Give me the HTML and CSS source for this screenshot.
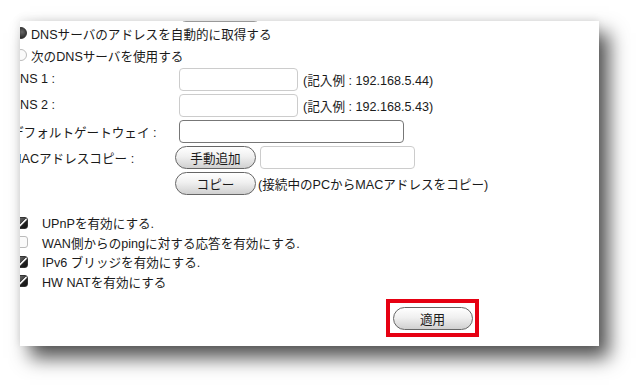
FILE: index.html
```html
<!DOCTYPE html>
<html lang="ja">
<head>
    <meta charset="UTF-8">
    <meta name="viewport" content="width=device-width, initial-scale=1.0">
    <title>WAN設定</title>
    <link rel="stylesheet" href="styles.css">
</head>
<body>
    <div class="panel">
        <div class="inner">
            <div class="top-btn"></div>

            <div class="radio-row">
                <span class="radio on"></span>
                <span>DNSサーバのアドレスを自動的に取得する</span>
            </div>
            <div class="radio-row">
                <span class="radio"></span>
                <span>次のDNSサーバを使用する</span>
            </div>

            <div class="row">
                <label class="lbl">DNS 1 :</label>
                <input type="text" class="field short">
                <span class="hint">(記入例 : 192.168.5.44)</span>
            </div>
            <div class="row">
                <label class="lbl">DNS 2 :</label>
                <input type="text" class="field short">
                <span class="hint">(記入例 : 192.168.5.43)</span>
            </div>
            <div class="row">
                <label class="lbl">デフォルトゲートウェイ :</label>
                <input type="text" class="field long">
            </div>
            <div class="row">
                <label class="lbl">MACアドレスコピー :</label>
                <button class="pill">手動追加</button>
                <input type="text" class="field mac">
            </div>
            <div class="row">
                <span class="lbl"></span>
                <button class="pill">コピー</button>
                <span class="hint tight">(接続中のPCからMACアドレスをコピー)</span>
            </div>

            <div class="checks">
                <div class="check-row"><span class="box on"></span>UPnPを有効にする.</div>
                <div class="check-row"><span class="box"></span>WAN側からのpingに対する応答を有効にする.</div>
                <div class="check-row"><span class="box on"></span>IPv6 ブリッジを有効にする.</div>
                <div class="check-row"><span class="box on"></span>HW NATを有効にする</div>
            </div>

            <div class="apply-area">
                <div class="mark">
                    <button class="pill apply">適用</button>
                </div>
            </div>
        </div>
    </div>
</body>
</html>
```

FILE: styles.css
```css
html, body {
    margin: 0;
    background: #fff;
}

body {
    padding: 21px 0 42px 20px;
    min-height: 388px;
    box-sizing: border-box;
    font-family: "Liberation Sans", "Noto Sans CJK JP", sans-serif;
    font-size: 12.6px;
    color: #1a1a1a;
}

.panel {
    width: 579px;
    height: 325px;
    background: #fff;
    overflow: hidden;
    box-shadow: 10px 12px 18px rgba(0, 0, 0, 0.68), -1px -2px 8px rgba(0, 0, 0, 0.08);
}

.inner {
    margin-left: -9px;
}

.top-btn {
    margin: -21px 0 0 167px;
    width: 82px;
    height: 20px;
    border: 1px solid #999;
    border-radius: 8px;
    background: linear-gradient(#fff, #e6e6e6);
}

.radio-row {
    height: 22px;
    display: flex;
    align-items: center;
}

.radio {
    width: 12px;
    height: 12px;
    border-radius: 50%;
    margin: 0 4px 0 4px;
    border: 1px solid #bbb;
    background: #fafafa;
    box-sizing: border-box;
}
.radio.on {
    border-color: #333;
    background: radial-gradient(circle at 60% 40%, #666, #111);
}

.row {
    height: 26px;
    display: flex;
    align-items: center;
}

.lbl {
    width: 168px;
    flex: none;
    white-space: nowrap;
}

.field {
    height: 23px;
    box-sizing: border-box;
    border: 1px solid #ccc;
    border-radius: 4px;
    background: #fff;
    font: inherit;
}
.field.short { width: 119px; }
.field.long { width: 225px; border-color: #777; }
.field.mac { width: 155px; margin-left: 4px; }

.hint {
    margin-left: 5px;
    white-space: nowrap;
}
.hint.tight { margin-left: 2px; }

.pill {
    width: 81px;
    height: 23px;
    margin-left: -4px;
    border: 1px solid #666;
    border-radius: 12px;
    background: linear-gradient(#fff, #f0f0f0 45%, #d0d0d0);
    font: inherit;
    color: #1a1a1a;
    padding: 0;
}

.checks {
    margin-top: 17px;
}

.check-row {
    height: 19.5px;
    display: flex;
    align-items: center;
    white-space: nowrap;
}

.box {
    width: 12px;
    height: 12px;
    box-sizing: border-box;
    border-radius: 3px;
    margin: 0 14px 0 5px;
    border: 1px solid #bbb;
    background: #fafafa;
}
.box.on {
    border-color: #333;
    background: linear-gradient(135deg, #777 0%, #444 45%, #eee 50%, #eee 56%, #222 62%, #111 100%);
}

.apply-area {
    margin-top: 8px;
    padding-left: 375px;
}

.mark {
    width: 93px;
    height: 38px;
    box-sizing: border-box;
    border: 4px solid #e60012;
    display: flex;
    align-items: center;
    justify-content: center;
}

.apply {
    width: 80px;
    margin-left: 0;
}
```
